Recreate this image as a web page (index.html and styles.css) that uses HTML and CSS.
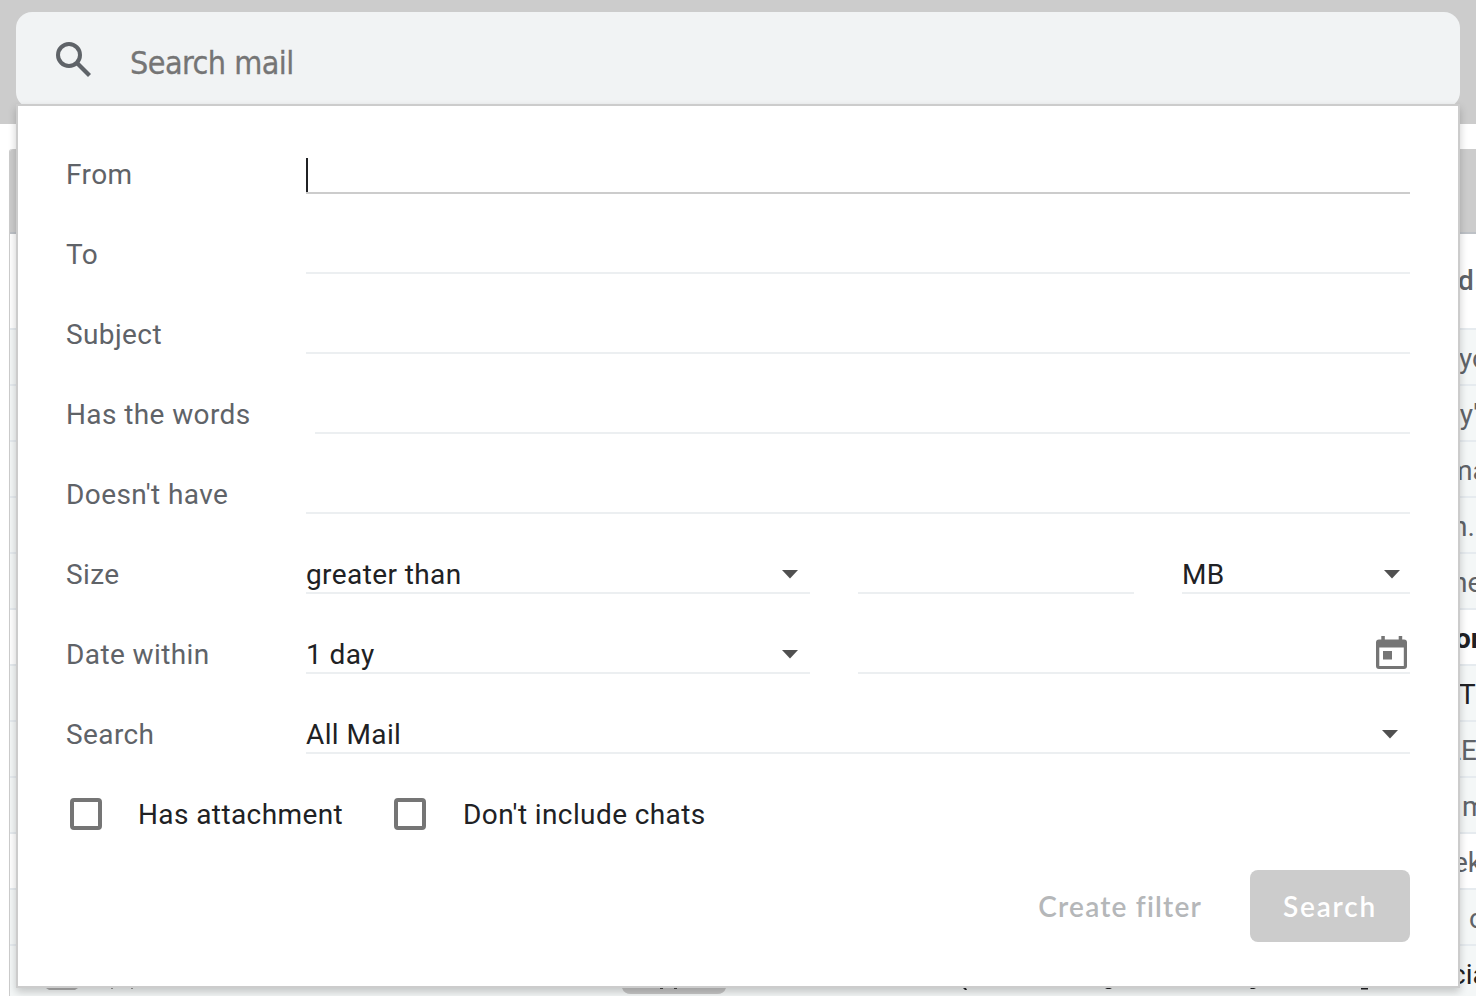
FILE: index.html
```html
<!DOCTYPE html>
<html lang="en">
<head>
<meta charset="utf-8">
<title>Search mail</title>
<link rel="stylesheet" href="styles.css">
</head>
<body>
<div class="app">
  <header class="topbar"></header>
  <main class="mailbox">
    <div class="toolbar"></div>
    <div class="tabs"><span class="snippet tab-label">d.</span></div>
    <div class="mail read"><span class="snippet s1">yo</span></div>
    <div class="mail read"><span class="snippet s2">ry'</span></div>
    <div class="mail read"><span class="snippet s3">ma</span></div>
    <div class="mail read"><span class="snippet s4">n.</span></div>
    <div class="mail read"><span class="snippet s5">ne</span></div>
    <div class="mail"><span class="snippet s6">or</span></div>
    <div class="mail read"><span class="snippet s7">T</span></div>
    <div class="mail read"><span class="snippet s8">LE</span></div>
    <div class="mail read"><span class="snippet s9">m</span></div>
    <div class="mail"><span class="snippet s10">ek</span></div>
    <div class="mail read"><span class="snippet s11">c</span></div>
    <div class="mail read last"><span class="snippet s12">cia</span>
      <svg class="row-edge" viewBox="0 0 1466 8" width="1466" height="8">
        <path d="M36 0h32l-3 2H39z" fill="#b0b0b0"/>
        <path d="M101 0h2v1h-2zM121 0h2v1h-2z" fill="#999"/>
        <path d="M612 0h104q-2 6-9 6h-86q-7 0-9-6z" fill="#c6c6c6"/>
        <path d="M650 0h3v1h-3zM664 0h3v1h-3z" fill="#444"/>
        <path d="M953 0h3l1 2h-2zM1095 0h7l-2 1h-3zM1240 0h6l-2 1h-3zM1351 0h7v1.500h-7z" fill="#202124"/>
      </svg>
    </div>
  </main>

  <section class="search">
    <div class="searchbar">
      <svg class="lens" viewBox="0 0 36 36" width="36" height="36">
        <circle cx="13" cy="13" r="11" fill="none" stroke="#5f6368" stroke-width="4"/>
        <path d="M21 21L33.500 33.500" fill="none" stroke="#5f6368" stroke-width="4.200"/>
      </svg>
      <span class="placeholder">Search mail</span>
    </div>
    <form class="panel">
      <div class="row"><span class="label">From</span><div class="field focused"><span class="caret"></span></div></div>
      <div class="row"><span class="label">To</span><div class="field"></div></div>
      <div class="row"><span class="label">Subject</span><div class="field"></div></div>
      <div class="row"><span class="label">Has the words</span><div class="field inset"></div></div>
      <div class="row"><span class="label">Doesn't have</span><div class="field"></div></div>
      <div class="row"><span class="label">Size</span>
        <div class="field select compare"><span class="value">greater than</span><svg class="arrow" viewBox="0 0 16 9" width="16" height="9"><path d="M0 0h16L8 8.500z"/></svg></div>
        <div class="field amount"></div>
        <div class="field select unit"><span class="value">MB</span><svg class="arrow" viewBox="0 0 16 9" width="16" height="9"><path d="M0 0h16L8 8.500z"/></svg></div>
      </div>
      <div class="row"><span class="label">Date within</span>
        <div class="field select compare"><span class="value">1 day</span><svg class="arrow" viewBox="0 0 16 9" width="16" height="9"><path d="M0 0h16L8 8.500z"/></svg></div>
        <div class="field date"><svg class="calendar" viewBox="0 0 32 34" width="32" height="34">
          <path fill="#757575" fill-rule="evenodd" d="M5.300 0h3.500v3.500h13.900V0h3.500v3.500H28q3 0 3 3V30q0 3-3 3H3q-3 0-3-3V6.500q0-3 3-3h2.300zM3.300 11.500V30h24.500V11.500zM7 15h9v8.500H7z"/>
        </svg></div>
      </div>
      <div class="row"><span class="label">Search</span>
        <div class="field select folder"><span class="value">All Mail</span><svg class="arrow" viewBox="0 0 16 9" width="16" height="9"><path d="M0 0h16L8 8.500z"/></svg></div>
      </div>
      <div class="checks">
        <span class="box"></span><span class="check-label attach">Has attachment</span>
        <span class="box"></span><span class="check-label chats">Don't include chats</span>
      </div>
      <div class="actions">
        <span class="create">Create filter</span>
        <span class="submit">Search</span>
      </div>
    </form>
  </section>
</div>
</body>
</html>
```
FILE: styles.css
```css
* { box-sizing: border-box; }
body { margin: 0; background: #fff; font-family: Roboto, "Liberation Sans", sans-serif; font-size: 28px; color: #202124; }
.app { position: relative; width: 1476px; height: 996px; overflow: hidden; }

/* Mailbox behind the panel */
.topbar { height: 124px; background: #ccc; margin-bottom: 25px; }
.mailbox { width: 1467px; margin-left: 9px; border-left: 1px solid #ccc; border-top-left-radius: 3px; background: #fff; }
.toolbar { height: 85px; background: #ccc; border-bottom: 2px solid #bdc1c6; border-top-left-radius: 3px; }
.tabs, .mail { overflow: hidden; white-space: nowrap; border-bottom: 2px solid #e6ebef; color: #5f6368; }
.tabs { height: 96px; line-height: 94px; font-weight: 500; }
.mail { height: 56px; line-height: 58px; }
.read { background: #f4f7f7; }
.snippet { display: block; }
.tab-label { padding-left: 1448px; letter-spacing: .8px; }
.s1 { padding-left: 1449px; }
.s2 { padding-left: 1440px; }
.s3 { padding-left: 1438px; }
.s4 { padding-left: 1442px; }
.s5 { padding-left: 1442px; }
.s6 { padding-left: 1445px; font-weight: 700; color: #202124; }
.s7 { padding-left: 1449px; color: #202124; }
.s8 { padding-left: 1436px; }
.s9 { padding-left: 1452px; }
.s10 { padding-left: 1443px; }
.s11 { padding-left: 1459px; }
.s12 { padding-left: 1441px; color: #202124; height: 42px; }
.row-edge { display: block; }

/* Search box and advanced panel */
.search { position: absolute; left: 16px; top: 12px; width: 1444px; }
.searchbar { display: flex; align-items: flex-start; height: 96px; padding: 30px 0 0 40px; border-radius: 16px; background: #f1f3f4; }
.placeholder { margin: 1px 0 0 38px; font: 32px/40px "DejaVu Sans Condensed", "DejaVu Sans", sans-serif; font-stretch: condensed; letter-spacing: -.55px; color: #757575; -webkit-text-stroke: .3px #757575; }
.panel { position: relative; height: 884px; margin-top: -4px; padding: 8px 48px 0; border: 2px solid #ccc; background: #fff; box-shadow: 0 4px 8px rgba(0, 0, 0, .2); }
.row { display: flex; align-items: flex-end; height: 80px; }
.label { width: 240px; height: 38px; line-height: 38px; letter-spacing: .4px; color: #5f6368; }
.field { flex: 1; height: 38px; border-bottom: 2px solid #eceff1; }
.focused { border-color: #ccc; }
.caret { display: block; width: 2px; height: 34px; margin-top: 2px; background: #202124; }
.inset { margin-left: 9px; }
.select { display: flex; align-items: center; justify-content: space-between; letter-spacing: .4px; }
.value { height: 36px; line-height: 38px; }
.arrow { margin-right: 12px; fill: #505050; }
.compare { flex: 0 0 504px; margin-right: 48px; }
.amount { flex: 0 0 276px; margin-right: 48px; }
.unit .arrow { margin-right: 10px; }
.date { display: flex; justify-content: flex-end; }
.calendar { margin-right: 2px; }
.checks { display: flex; align-items: center; height: 36px; margin: 42px 0 0 4px; }
.box { width: 32px; height: 32px; border: 4px solid #757575; border-radius: 4px; }
.check-label { margin-left: 36px; letter-spacing: .4px; }
.attach { width: 256px; }
.chats { margin-left: 37px; }
.actions { display: flex; justify-content: flex-end; align-items: center; height: 72px; margin-top: 38px; font-family: Lato, sans-serif; font-weight: 600; letter-spacing: 1.2px; }
.create { margin-right: 48px; color: #b5b7b9; }
.submit { width: 160px; line-height: 72px; text-align: center; border-radius: 8px; background: #ccc; color: #fff; letter-spacing: 1.8px; }
```
